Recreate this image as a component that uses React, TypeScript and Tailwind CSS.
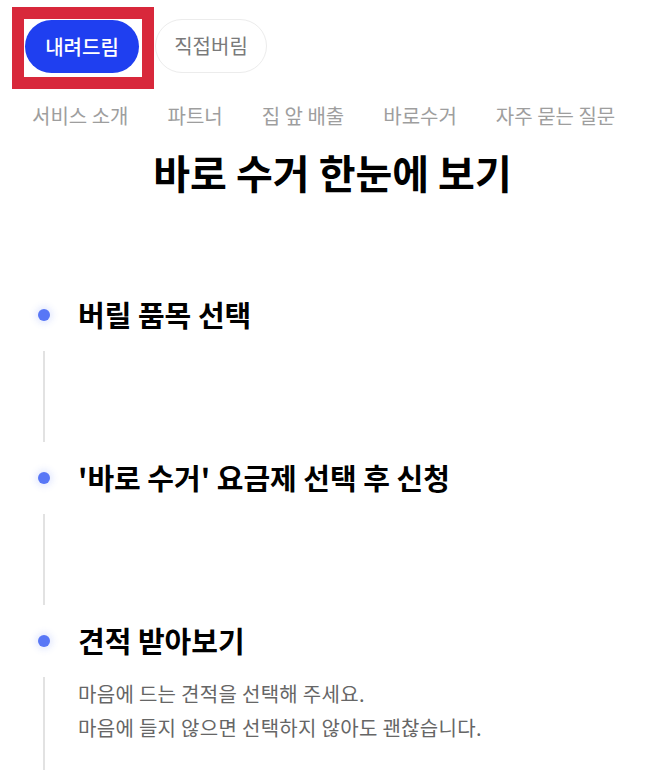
const steps = [
  { title: "버릴 품목 선택", lines: [] as string[] },
  { title: "'바로 수거' 요금제 선택 후 신청", lines: [] as string[] },
  {
    title: "견적 받아보기",
    lines: [
      "마음에 드는 견적을 선택해 주세요.",
      "마음에 들지 않으면 선택하지 않아도 괜찮습니다.",
    ],
  },
];

const tabs = ["서비스 소개", "파트너", "집 앞 배출", "바로수거", "자주 묻는 질문"];

export default function App() {
  return (
    <div
      className="h-[770px] w-[665px] overflow-hidden bg-white"
      style={{ fontFamily: '"Noto Sans CJK KR", "Noto Sans", sans-serif' }}
    >
      {/* mode toggle; the red frame marks the selected one */}
      <div className="flex items-start pl-[12px] pt-[7px]">
        <div className="h-[82px] w-[142px] border-[12px] border-[#d8283b] bg-white">
          <button
            type="button"
            className="ml-px mt-px flex h-[53px] w-[114px] items-center justify-center rounded-full bg-[#1f3ff0] text-[20px] font-medium text-white"
          >
            내려드림
          </button>
        </div>
        <button
          type="button"
          className="ml-px mt-[12px] flex h-[54px] w-[112px] items-center justify-center rounded-full border border-[#ececec] bg-white text-[20px] text-[#7a7a7a]"
        >
          직접버림
        </button>
      </div>

      <nav className="mt-[13px] flex gap-[39px] pl-[32px] text-[20px] leading-[28px] text-[#9e9e9e]">
        {tabs.map((t) => (
          <span key={t} className="whitespace-nowrap">
            {t}
          </span>
        ))}
      </nav>

      <h1 className="mt-[17px] text-center text-[40px] font-bold leading-[50px] text-black">
        바로 수거 한눈에 보기
      </h1>

      <div className="mt-[100px]">
        {steps.map((s, i) => (
          <div key={i}>
            <div className="flex h-[36px] items-center pl-[38px]">
              <span className="h-[12px] w-[12px] rounded-full bg-[#5877f6] shadow-[0_0_6px_3px_rgba(88,119,246,0.15)]" />
              <span className="ml-[28px] whitespace-nowrap text-[29px] font-bold text-black">
                {s.title}
              </span>
            </div>
            <div
              className={
                i === steps.length - 1
                  ? "ml-[43px] mt-[18px] h-[120px] border-l-2 border-[#e2e2e2] pl-[33px]"
                  : "mb-[18px] ml-[43px] mt-[18px] h-[91px] border-l-2 border-[#e2e2e2] pl-[33px]"
              }
            >
              {s.lines.map((l) => (
                <p key={l} className="text-[20px] leading-[34px] tracking-[0.3px] text-[#666666]">
                  {l}
                </p>
              ))}
            </div>
          </div>
        ))}
      </div>
    </div>
  );
}
